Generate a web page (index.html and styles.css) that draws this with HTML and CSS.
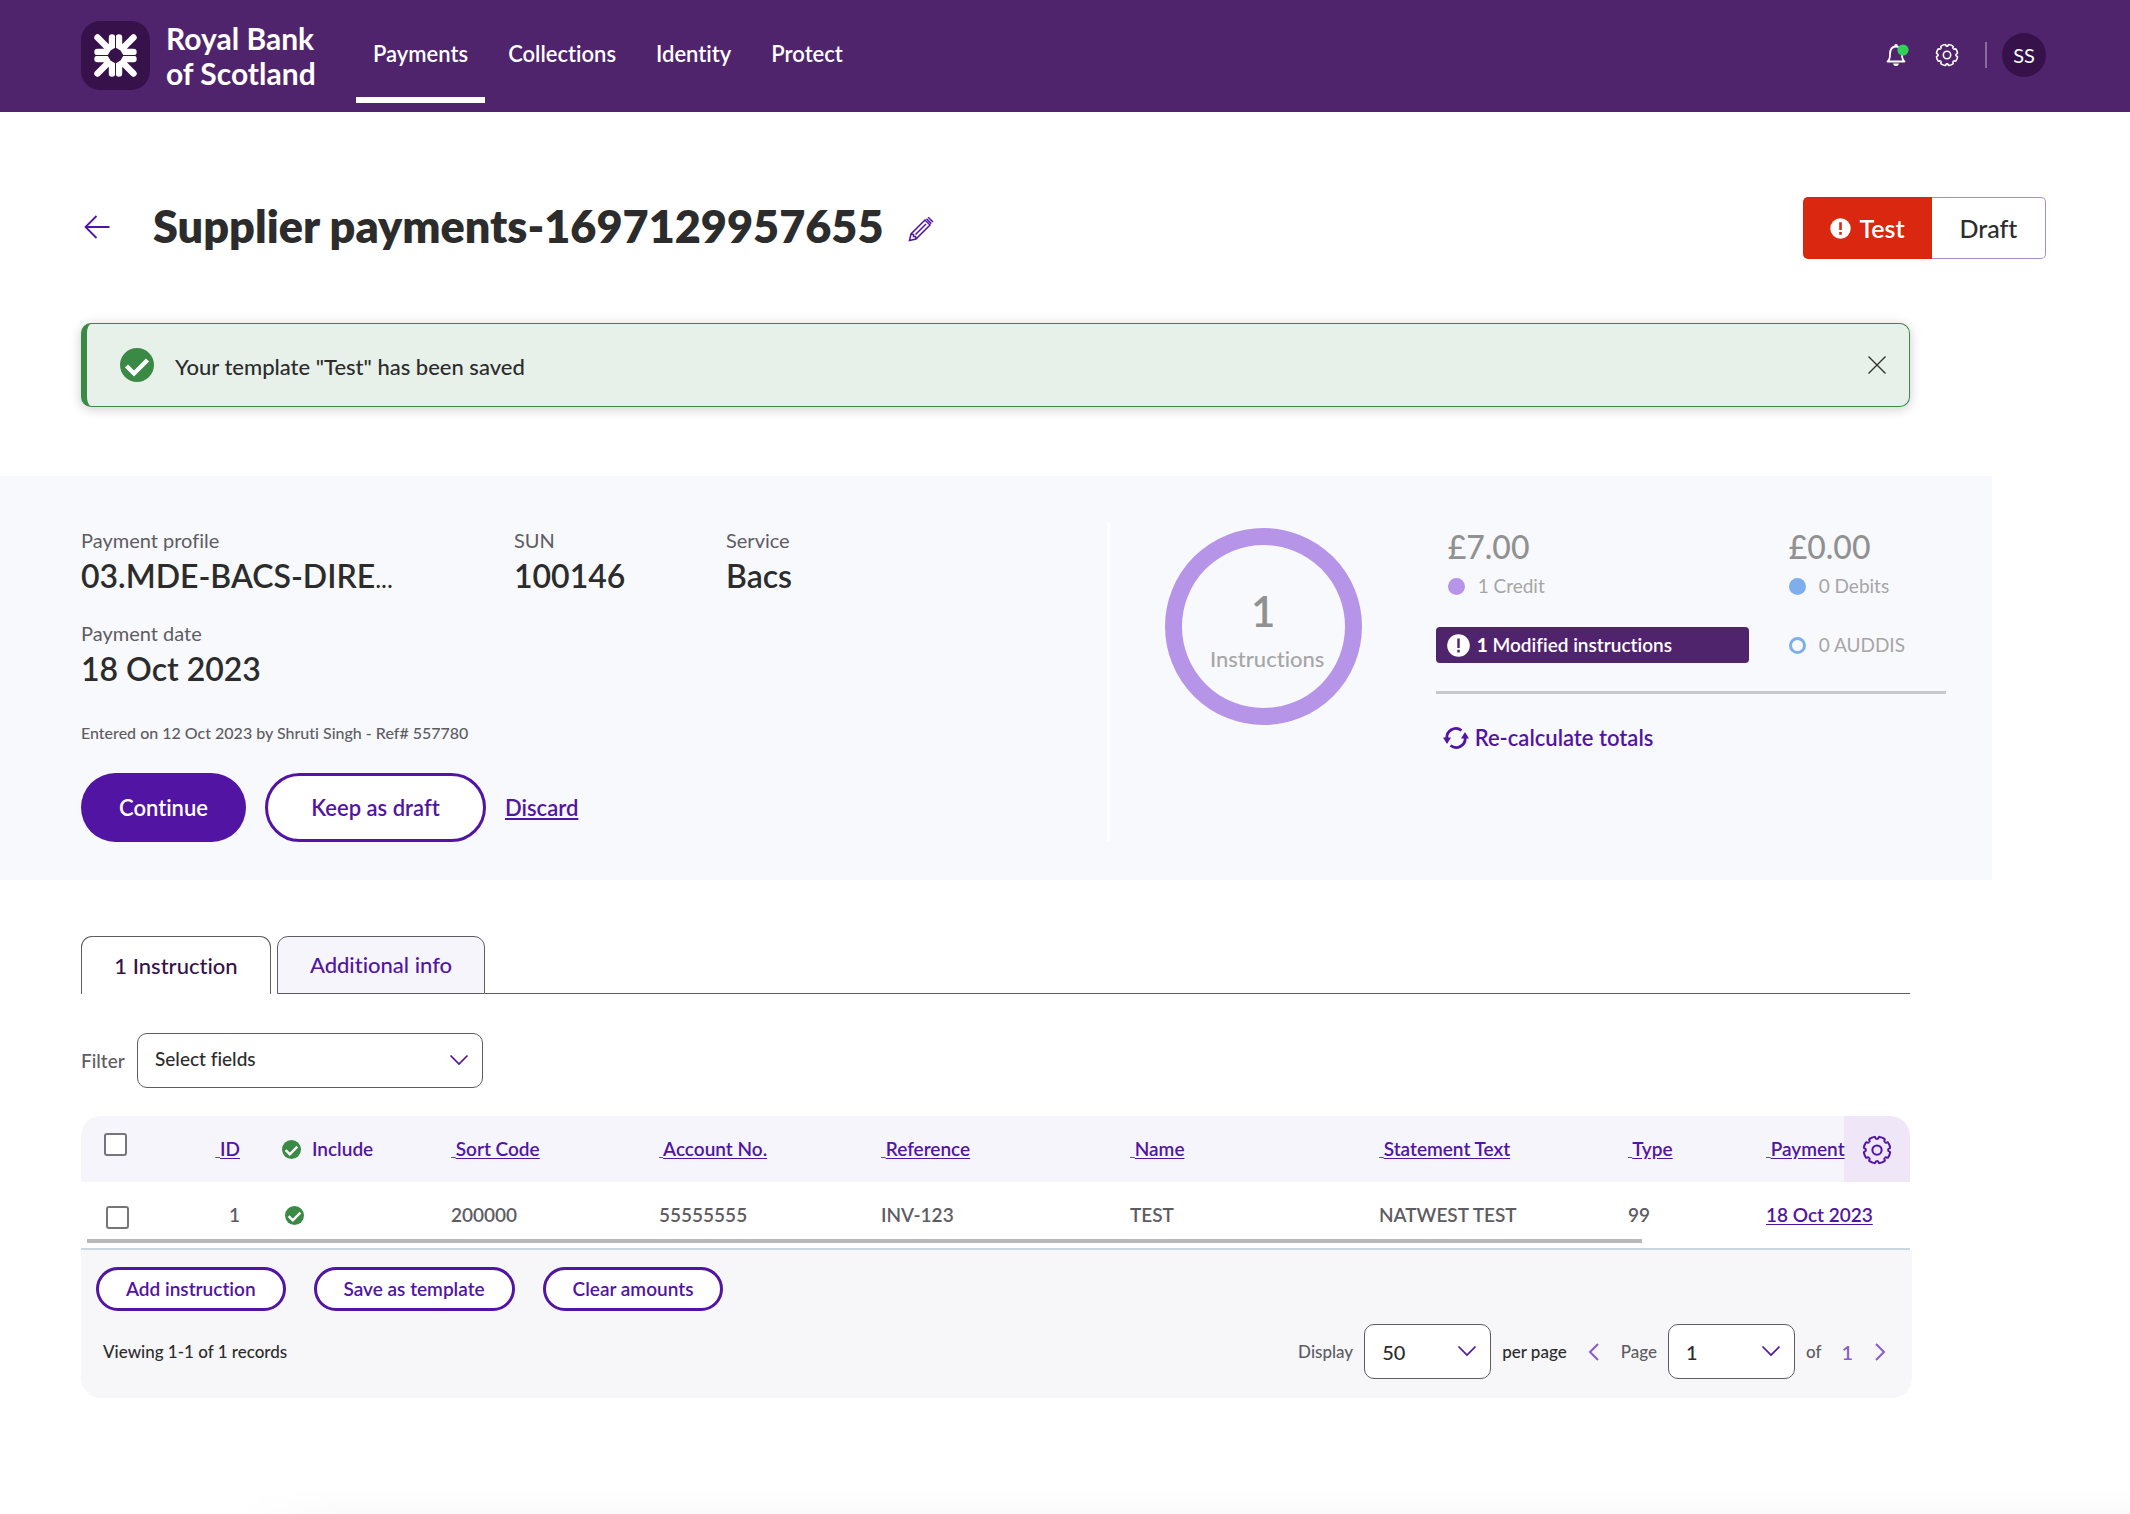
FILE: index.html
```html
<!DOCTYPE html>
<html lang="en">
<head>
<meta charset="utf-8">
<meta name="viewport" content="width=device-width, initial-scale=1">
<title>Supplier payments</title>
<link rel="stylesheet" href="styles.css">
</head>
<body>
<svg class="sprite" aria-hidden="true">
  <defs>
    <path id="cog-tooth" d="M12 3.1Q12.93 3.1 13.1 2.5Q13.4 1.3 14.04 1.5A10.7 10.7 0 0 1 17.98 3.13Q18.57 3.44 17.94 4.51Q17.63 5.04 18.29 5.71"/>
    <symbol id="cog" viewBox="0 0 24 24">
      <g fill="none" stroke="currentColor" stroke-width="1.6">
        <use href="#cog-tooth"/>
        <use href="#cog-tooth" transform="rotate(45 12 12)"/>
        <use href="#cog-tooth" transform="rotate(90 12 12)"/>
        <use href="#cog-tooth" transform="rotate(135 12 12)"/>
        <use href="#cog-tooth" transform="rotate(180 12 12)"/>
        <use href="#cog-tooth" transform="rotate(225 12 12)"/>
        <use href="#cog-tooth" transform="rotate(270 12 12)"/>
        <use href="#cog-tooth" transform="rotate(315 12 12)"/>
        <circle cx="12" cy="12" r="3.7"/>
      </g>
    </symbol>
    <symbol id="tick" viewBox="0 0 34 34">
      <circle cx="17" cy="17" r="17" fill="#3a8a45"/>
      <path d="M6.500 18L14 25.500L27.500 12" fill="none" stroke="#fff" stroke-width="4.400"/>
    </symbol>
    <symbol id="chevron" viewBox="0 0 20 12">
      <path d="M1.500 1.500L10 10L18.500 1.500" fill="none" stroke="currentColor" stroke-width="1.700"/>
    </symbol>
    <g id="daisy-quarter">
      <path d="M16.500 16.500L27 27M31 16.500V26M16.500 31H26" stroke="#fff" stroke-width="6.400" stroke-linecap="round"/>
      <path d="M34 24V29L29 34H24Z" fill="#fff"/>
    </g>
  </defs>
</svg>

<header class="topbar">
  <a class="brand" href="#">
    <svg class="brand-mark" viewBox="0 0 69 69" aria-hidden="true">
      <rect width="69" height="69" rx="19" fill="#36114a"/>
      <use href="#daisy-quarter"/>
      <use href="#daisy-quarter" transform="rotate(90 34.500 34.500)"/>
      <use href="#daisy-quarter" transform="rotate(180 34.500 34.500)"/>
      <use href="#daisy-quarter" transform="rotate(270 34.500 34.500)"/>
      <path d="M34.500 26.500L39.500 29.500L42.500 34.500L39.500 39.500L34.500 42.500L29.500 39.500L26.500 34.500L29.500 29.500Z" fill="#36114a"/>
      <path d="M34.500 12V28M34.500 41V57M12 34.500H28M41 34.500H57" stroke="#36114a" stroke-width="1"/>
    </svg>
    <span class="brand-name">Royal Bank<br>of Scotland</span>
  </a>
  <nav class="main-nav">
    <a class="nav-link is-current" href="#">Payments</a>
    <a class="nav-link" href="#">Collections</a>
    <a class="nav-link" href="#">Identity</a>
    <a class="nav-link" href="#">Protect</a>
  </nav>
  <div class="user-tools">
    <button class="icon-button" type="button" aria-label="Notifications">
      <svg width="24" height="24" viewBox="0 0 24 24" aria-hidden="true">
        <path d="M2.500 18.500C4.500 17 5 15 5 11.500C5 6 7.500 3.500 11 3.500S17 6 17 11.500C17 15 17.500 17 19.500 18.500Z" fill="none" stroke="#fff" stroke-width="1.800" stroke-linejoin="round"/>
        <path d="M9.500 3.500V1.500Q11 .5 12.500 1.500V3.500ZM8 20.500H14Q13.500 23 11 23T8 20.500Z" fill="#fff"/>
        <circle cx="18" cy="7" r="5.600" fill="#2fd159"/>
      </svg>
    </button>
    <button class="icon-button" type="button" aria-label="Settings">
      <svg width="24" height="24" aria-hidden="true"><use href="#cog"/></svg>
    </button>
    <span class="tool-divider"></span>
    <button class="avatar" type="button">SS</button>
  </div>
</header>

<main>
  <div class="title-row">
    <a class="back-link" href="#" aria-label="Back">
      <svg width="26" height="24" viewBox="0 0 26 24" aria-hidden="true"><path d="M12.500 1L1.500 12L12.500 23M1.500 12H25.500" fill="none" stroke="currentColor" stroke-width="1.800"/></svg>
    </a>
    <h1>Supplier payments-1697129957655</h1>
    <button class="edit-button" type="button" aria-label="Edit name">
      <svg width="26" height="26" viewBox="0 0 26 26" aria-hidden="true">
        <g fill="none" stroke="currentColor" stroke-width="1.500">
          <path d="M1.500 24.500L3 18L17 4L22 9L8 23ZM3 18L5.500 18.500V20.500H7.500L8 23M7.500 18.500L18 8"/>
          <path d="M18.500 2.800L23.300 7.600M20.200 1.200L25 6"/>
        </g>
      </svg>
    </button>
    <div class="status">
      <span class="status-test">
        <svg width="21" height="21" viewBox="0 0 21 21" aria-hidden="true"><circle cx="10.500" cy="10.500" r="10.200" fill="#fff"/><path d="M10.500 4.200V12M10.500 14V16.800" stroke="#da2810" stroke-width="2.600"/></svg>
        Test
      </span>
      <span class="status-draft">Draft</span>
    </div>
  </div>

  <div class="alert" role="status">
    <svg width="34" height="34" aria-hidden="true"><use href="#tick"/></svg>
    <p>Your template "Test" has been saved</p>
    <button class="alert-close" type="button" aria-label="Dismiss">
      <svg width="20" height="20" viewBox="0 0 20 20" aria-hidden="true"><path d="M1.500 1.500L18.500 18.500M18.500 1.500L1.500 18.500" stroke="#333" stroke-width="1.400"/></svg>
    </button>
  </div>

  <section class="summary">
    <div class="details">
      <dl class="facts">
        <div><dt>Payment profile</dt><dd>03.MDE-BACS-DIRE<span class="more">...</span></dd></div>
        <div><dt>SUN</dt><dd>100146</dd></div>
        <div><dt>Service</dt><dd>Bacs</dd></div>
        <div><dt>Payment date</dt><dd>18 Oct 2023</dd></div>
      </dl>
      <p class="entered">Entered on 12 Oct 2023 by Shruti Singh - Ref# 557780</p>
      <div class="actions">
        <button class="button button-primary" type="button">Continue</button>
        <button class="button button-outline" type="button">Keep as draft</button>
        <a class="discard" href="#">Discard</a>
      </div>
    </div>
    <div class="totals">
      <div class="donut">
        <span class="donut-count">1</span>
        <span class="donut-label">Instructions</span>
      </div>
      <div class="stats">
        <div class="stats-grid">
          <div class="stat"><strong class="amount">£7.00</strong><span class="legend"><i class="dot dot-credit"></i>1 Credit</span></div>
          <div class="stat"><strong class="amount">£0.00</strong><span class="legend"><i class="dot dot-debit"></i>0 Debits</span></div>
          <div class="modified">
            <svg width="23" height="23" viewBox="0 0 23 23" aria-hidden="true"><circle cx="11.500" cy="11.500" r="11.300" fill="#fff"/><path d="M11.500 4.500V14M11.500 15.800V18.600" stroke="#4f246d" stroke-width="2.400"/></svg>
            <span><b>1</b> Modified instructions</span>
          </div>
          <div class="legend legend-auddis"><i class="dot dot-auddis"></i>0 AUDDIS</div>
        </div>
        <button class="recalculate" type="button">
          <svg width="26" height="24" viewBox="0 0 26 24" aria-hidden="true">
            <path d="M4 13A9 9 0 0 1 18.500 4.500M22 11A9 9 0 0 1 7.500 19.500" fill="none" stroke="currentColor" stroke-width="2.800"/>
            <path d="M0 11.500H8L4 18ZM18 12.500H26L22 6Z" fill="currentColor"/>
          </svg>
          Re-calculate totals
        </button>
      </div>
    </div>
  </section>

  <div class="workarea">
    <div class="tabs" role="tablist">
      <button class="tab is-active" type="button" role="tab" aria-selected="true">1 Instruction</button>
      <button class="tab" type="button" role="tab" aria-selected="false">Additional info</button>
      <span class="tab-rule"></span>
    </div>

    <div class="filter">
      <label for="filter-field">Filter</label>
      <div class="select select-wide">
        <select id="filter-field"><option>Select fields</option></select>
        <svg width="20" height="12" aria-hidden="true"><use href="#chevron"/></svg>
      </div>
    </div>

    <div class="table-wrap">
      <table>
        <colgroup>
          <col class="c-check"><col class="c-id"><col class="c-include"><col class="c-sort"><col class="c-account"><col class="c-text"><col class="c-text"><col class="c-text"><col class="c-type"><col><col class="c-cog">
        </colgroup>
        <thead>
          <tr>
            <th class="check"><input type="checkbox" aria-label="Select all"></th>
            <th class="num"><u>&nbsp;</u><a href="#">ID</a></th>
            <th class="include"><span class="include-head"><svg width="19" height="19" aria-hidden="true"><use href="#tick"/></svg>Include</span></th>
            <th><u>&nbsp;</u><a href="#">Sort Code</a></th>
            <th><u>&nbsp;</u><a href="#">Account No.</a></th>
            <th><u>&nbsp;</u><a href="#">Reference</a></th>
            <th><u>&nbsp;</u><a href="#">Name</a></th>
            <th><u>&nbsp;</u><a href="#">Statement Text</a></th>
            <th><u>&nbsp;</u><a href="#">Type</a></th>
            <th><u>&nbsp;</u><a href="#">Payment</a></th>
            <th class="cog-cell"><button type="button" aria-label="Column settings"><svg width="30" height="30" aria-hidden="true"><use href="#cog"/></svg></button></th>
          </tr>
        </thead>
        <tbody>
          <tr>
            <td class="check"><input type="checkbox" aria-label="Select instruction 1"></td>
            <td class="num">1</td>
            <td class="include"><svg width="19" height="19" role="img" aria-label="Included"><use href="#tick"/></svg></td>
            <td>200000</td>
            <td>55555555</td>
            <td>INV-123</td>
            <td>TEST</td>
            <td>NATWEST TEST</td>
            <td>99</td>
            <td colspan="2"><a href="#">18 Oct 2023</a></td>
          </tr>
        </tbody>
      </table>
      <div class="scroll-thumb"></div>
    </div>

    <div class="table-footer">
      <div class="table-actions">
        <button class="button-small" type="button">Add instruction</button>
        <button class="button-small" type="button">Save as template</button>
        <button class="button-small" type="button">Clear amounts</button>
      </div>
      <div class="pager">
        <span class="viewing">Viewing 1-1 of 1 records</span>
        <label for="page-size">Display</label>
        <div class="select select-short">
          <select id="page-size"><option>50</option></select>
          <svg width="20" height="12" aria-hidden="true"><use href="#chevron"/></svg>
        </div>
        <span class="per-page">per page</span>
        <button class="page-step" type="button" aria-label="Previous page"><svg width="12" height="18" viewBox="0 0 12 18" aria-hidden="true"><path d="M10 1L2 9L10 17" fill="none" stroke="currentColor" stroke-width="2"/></svg></button>
        <label for="page-number">Page</label>
        <div class="select select-short">
          <select id="page-number"><option>1</option></select>
          <svg width="20" height="12" aria-hidden="true"><use href="#chevron"/></svg>
        </div>
        <span>of</span>
        <a class="page-last" href="#">1</a>
        <button class="page-step" type="button" aria-label="Next page"><svg width="12" height="18" viewBox="0 0 12 18" aria-hidden="true"><path d="M2 1L10 9L2 17" fill="none" stroke="currentColor" stroke-width="2"/></svg></button>
      </div>
    </div>
  </div>
</main>
<div class="page-end"></div>
</body>
</html>
```
FILE: styles.css
```css
* { box-sizing: border-box; }

body {
  margin: 0;
  min-height: 100vh;
  display: flex;
  flex-direction: column;
  background: #fff;
  color: #2c2c2c;
  font-family: Lato, "Open Sans", sans-serif;
  font-size: 20px;
  line-height: 24px;
  font-variant-ligatures: none;
}

h1, p, dl, dd { margin: 0; }
button { padding: 0; border: 0; background: none; font: inherit; color: inherit; font-variant-ligatures: none; }
svg { display: block; flex: none; }
a { color: #5214a3; }
.sprite { position: absolute; width: 0; height: 0; }

/* Top bar */
.topbar {
  height: 112px;
  padding: 0 84px 0 81px;
  display: flex;
  align-items: flex-start;
  background: #4f246d;
  color: #fff;
}
.topbar a { color: #fff; text-decoration: none; }
.brand { display: flex; gap: 16px; width: 275px; padding-top: 21px; }
.brand-mark { width: 69px; height: 69px; }
.brand-name { font-size: 30px; line-height: 35px; font-weight: 700; white-space: nowrap; }
.main-nav { display: flex; gap: 6px; }
.nav-link {
  padding: 41px 17px 30px;
  border-bottom: 6px solid transparent;
  font-size: 22px;
  line-height: 26px;
  font-weight: 600;
}
.nav-link.is-current { border-color: #fff; }
.user-tools { margin-left: auto; height: 110px; display: flex; align-items: center; }
.icon-button { margin-right: 26px; }
.tool-divider { width: 2px; height: 26px; margin-right: 15px; background: #8a6b9e; }
.avatar { width: 44px; height: 44px; border-radius: 50%; background: #36114a; color: #fff; }

/* Title */
.title-row { display: flex; align-items: flex-start; padding: 85px 84px 0; }
.back-link { padding-top: 18px; margin-right: 43px; }
h1 { font-size: 45px; line-height: 58px; font-weight: 800; white-space: nowrap; }
.edit-button { margin: 19px 0 0 24px; color: #5214a3; }
.status { margin-left: auto; display: flex; height: 62px; font-size: 25px; line-height: 30px; font-weight: 500; }
.status span { display: flex; align-items: center; justify-content: center; }
.status-test { width: 129px; gap: 8px; border-radius: 5px 0 0 5px; background: #da2810; color: #fff; font-weight: 600; }
.status-draft { width: 114px; border: 1px solid #a98bd3; border-left: 0; border-radius: 0 5px 5px 0; }

/* Alert */
.alert {
  display: flex;
  align-items: center;
  gap: 21px;
  min-height: 84px;
  margin: 64px 220px 0 81px;
  padding: 0 22px 0 33px;
  border: 1px solid #3a8a45;
  border-left-width: 6px;
  border-radius: 10px;
  background: #e8f1e9;
  box-shadow: 0 2px 12px rgba(0, 0, 0, .2);
  font-size: 22px;
  line-height: 26px;
  font-weight: 500;
}
.alert p { padding-top: 4px; }
.alert-close { margin-left: auto; }

/* Summary */
.summary {
  display: grid;
  grid-template-columns: 5fr 4fr;
  margin: 69px 138px 0 0;
  padding: 47px 0 38px;
  background: #f8f9fc;
}
.details { padding: 5px 0 0 81px; }
.facts { display: grid; grid-template-columns: 433px 212px 1fr; row-gap: 23px; }
.facts dt { margin-bottom: 4px; color: #5e5c63; }
.facts dd { font-size: 32px; line-height: 40px; font-weight: 600; white-space: nowrap; }
.more { font-size: 25px; font-weight: 400; }
.entered { margin-top: 34px; color: #5e5c63; font-size: 16px; line-height: 20px; font-weight: 500; }
.actions { display: flex; align-items: center; gap: 19px; margin-top: 30px; font-size: 22px; line-height: 26px; font-weight: 600; }
.button { height: 69px; border-radius: 35px; }
.button-primary { width: 165px; background: #5214a3; color: #fff; }
.button-outline { width: 221px; border: 3px solid #5214a3; background: #fff; color: #5214a3; }
.discard { text-underline-offset: 2px; }

.totals { display: flex; gap: 74px; padding: 0 46px 0 55px; border-left: 3px solid #fff; }
.donut {
  flex: none;
  width: 197px;
  height: 197px;
  margin-top: 5px;
  border: 17px solid #b695e8;
  border-radius: 50%;
  display: flex;
  flex-direction: column;
  align-items: center;
  padding-top: 41px;
}
.donut-count { font-size: 42px; line-height: 50px; font-weight: 600; color: #919191; }
.donut-label { margin: 10px 0 0 8px; font-size: 22px; line-height: 26px; color: #a6a6a6; font-weight: 500; }
.stats { flex: 1; padding-top: 5px; }
.stats-grid {
  display: grid;
  grid-template-columns: 341px 1fr;
  row-gap: 29px;
  padding-bottom: 28px;
  border-bottom: 3px solid #c6c8ca;
}
.stat { padding-left: 12px; }
.amount { display: block; margin-bottom: 8px; font-size: 32px; line-height: 38px; font-weight: 500; color: #919191; }
.legend { display: flex; align-items: center; gap: 13px; color: #a6a6a6; font-size: 19px; }
.legend-auddis { padding-left: 12px; }
.dot { width: 17px; height: 17px; border-radius: 50%; }
.dot-credit { background: #b695e8; }
.dot-debit { background: #7eaeec; }
.dot-auddis { border: 3px solid #7eaeec; }
.modified {
  display: flex;
  align-items: center;
  gap: 7px;
  width: 313px;
  height: 36px;
  padding-left: 11px;
  border-radius: 4px;
  background: #4f246d;
  color: #fff;
  font-size: 19px;
  font-weight: 600;
}
.recalculate { display: flex; align-items: center; gap: 6px; margin: 31px 0 0 7px; color: #5214a3; font-size: 22px; line-height: 26px; font-weight: 600; }

/* Tabs and filter */
.workarea { margin: 56px 220px 0 81px; }
.tabs { display: flex; height: 58px; }
.tab {
  width: 208px;
  border: 1px solid #5e5c63;
  border-radius: 11px 11px 0 0;
  background: #f6f5fb;
  color: #5214a3;
  font-size: 22px;
  line-height: 26px;
  font-weight: 500;
}
.tab.is-active { width: 190px; border-bottom: 0; background: #fff; color: #36114a; }
.tab.is-active + .tab { margin-left: 6px; }
.tab-rule { flex: 1; border-bottom: 1px solid #5e5c63; }
.filter { display: flex; align-items: center; gap: 12px; margin-top: 39px; color: #5e5c63; }
.filter label { width: 44px; font-size: 19px; font-weight: 500; }

.select { position: relative; }
.select select {
  width: 100%;
  height: 55px;
  padding: 0 17px;
  appearance: none;
  border: 1px solid #5e5c63;
  border-radius: 10px;
  background: #fff;
  color: #2c2c2c;
  font: 500 20px/24px Lato, "Open Sans", sans-serif;
  font-variant-ligatures: none;
}
.select svg { position: absolute; right: 14px; top: 21px; color: #5214a3; pointer-events: none; }
.select-wide { width: 346px; }
.select-wide select { padding-bottom: 3px; font-size: 19px; }
.select-short { width: 127px; }

/* Instructions table */
.table-wrap { position: relative; margin-top: 28px; }
table { width: 100%; table-layout: fixed; border-collapse: separate; border-spacing: 0; }
.c-check { width: 92px; }
.c-id { width: 90px; }
.c-include { width: 166px; }
.c-sort { width: 208px; }
.c-account { width: 222px; }
.c-text { width: 249px; }
.c-type { width: 138px; }
.c-cog { width: 66px; }
th, td { height: 66px; padding: 0 0 0 22px; text-align: left; white-space: nowrap; font-size: 19px; font-weight: 600; }
th { background: #f6f5fb; color: #5214a3; }
th u { color: #5e5c63; }
th a, td a { text-underline-offset: 2px; }
th:first-child { border-top-left-radius: 20px; }
td { height: 68px; border-bottom: 2px solid #cbd7e0; color: #5e5c63; }
th.num, td.num { padding: 0 23px 0 0; text-align: right; }
th.include { padding-left: 19px; }
td.include { padding-left: 22px; }
.include-head { display: flex; align-items: center; gap: 11px; }
th.check { padding: 0 0 9px 23px; }
td.check { padding: 4px 0 0 25px; }
.check input {
  display: block;
  width: 23px;
  height: 23px;
  margin: 0;
  appearance: none;
  border: 2px solid #77757c;
  border-radius: 3px;
  background: #fff;
}
th.cog-cell { padding: 0; border-top-right-radius: 20px; background: #efe7f7; }
.cog-cell button { display: block; margin: 2px auto 0; color: #5214a3; }
.scroll-thumb { position: absolute; left: 6px; bottom: 7px; width: 85%; height: 4px; background: #b9b9b9; }

.table-footer { margin-right: -2px; padding: 17px 26px 19px 15px; border-radius: 0 0 20px 20px; background: #f7f7fa; }
.table-actions { display: flex; gap: 28px; }
.button-small { height: 44px; padding: 0 27px; border: 3px solid #5214a3; border-radius: 22px; background: #fff; color: #5214a3; font-size: 19px; font-weight: 600; }
.pager { display: flex; align-items: center; gap: 11px; margin-top: 13px; color: #5e5c63; font-size: 17px; line-height: 20px; font-weight: 500; }
.viewing { margin: 0 auto 0 7px; color: #2c2c2c; }
.per-page { color: #2c2c2c; }
.page-step { padding: 0 10px; color: #8a5bc8; }
.page-step:last-child { padding: 0 0 0 10px; }
.page-last { padding-left: 9px; color: #8a5bc8; font-size: 20px; text-decoration: none; }

.page-end {
  height: 24px;
  margin: auto 0 0 230px;
  background: linear-gradient(#fff, #fafafa);
  mask-image: linear-gradient(to right, transparent, #000 120px);
}
```
